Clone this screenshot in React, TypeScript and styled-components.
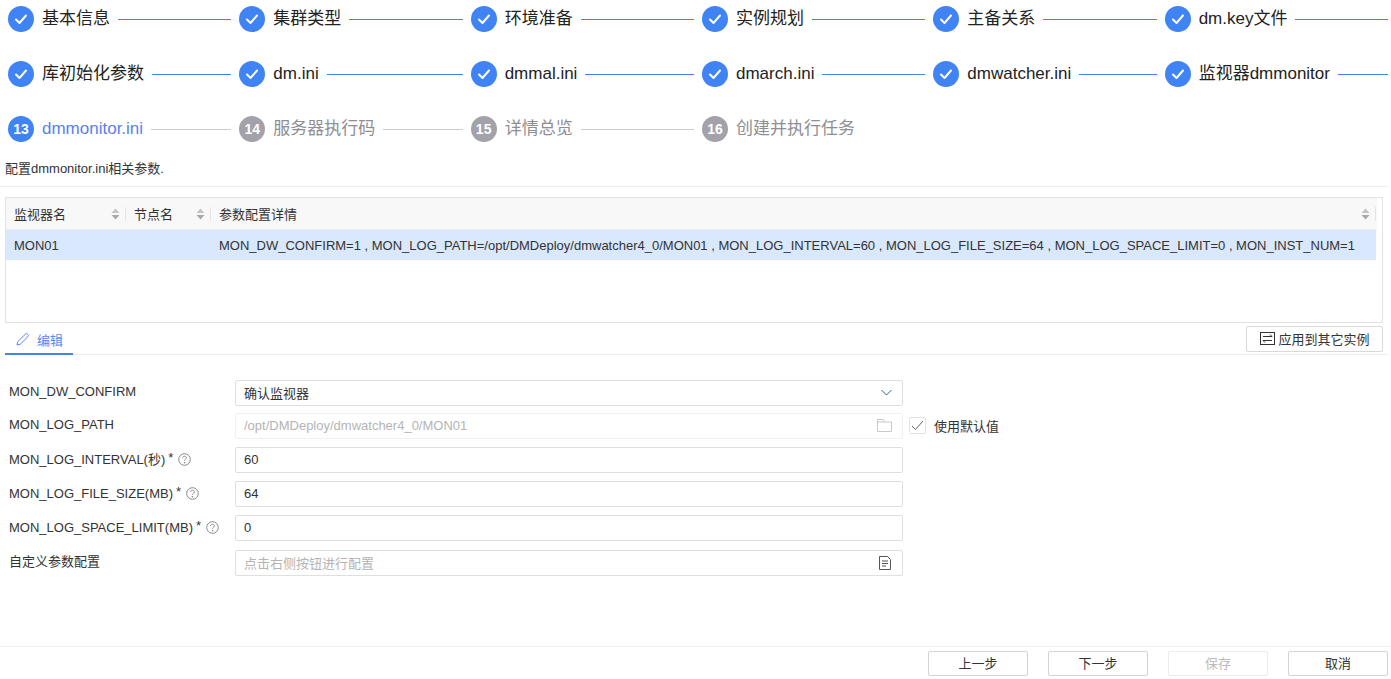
import React from "react";
import styled, { createGlobalStyle } from "styled-components";

const Global = createGlobalStyle`
  html, body { margin: 0; padding: 0; background: #fff; overflow: hidden; }
  body { font-family: "Liberation Sans", "Noto Sans CJK SC", sans-serif; color: #333; }
  * { box-sizing: border-box; }
`;
const Page = styled.div`
  width: 1391px; height: 679px; display: flex; flex-direction: column; overflow: hidden;
`;
const Steps = styled.div`
  width: 1388px; display: grid; grid-template-columns: repeat(6, 1fr); grid-auto-rows: 55px; padding-top: 6px; height: 163px;
`;
const Step = styled.div`
  display: flex; align-items: center; height: 26px; padding-left: 8px; min-width: 0;
`;
const Circle = styled.div<{ $state: string }>`
  width: 26px; height: 26px; border-radius: 50%; flex: none; display: flex; align-items: center; justify-content: center;
  color: #fff; font-size: 14px; font-weight: 700;
  background: ${p => (p.$state === "todo" ? "#a3a2aa" : "#3f83f4")};
`;
const StepTitle = styled.span<{ $state: string }>`
  margin-left: 8px; font-size: 17px; line-height: 24px; white-space: nowrap; flex: none;
  color: ${p => (p.$state === "todo" ? "#8e8e93" : p.$state === "active" ? "#5a7ff0" : "#222")};
`;
const StepLine = styled.div<{ $state: string }>`
  flex: 1; height: 1px; margin-left: 8px; background: ${p => (p.$state === "done" ? "#3f83f4" : "#ccc")};
`;
const Desc = styled.div`
  font-size: 13px; line-height: 16px; color: #333; padding-left: 5px; height: 26px; margin-top: -2px; border-bottom: 1px solid #eee; width: 1388px;
`;
const TableWrap = styled.div`
  margin: 10px 0 0 5px; width: 1378px; height: 126px; border: 1px solid #e2e2e2; overflow: hidden;
`;
const Head = styled.div`
  display: grid; grid-template-columns: 120px 85px 1165px; height: 32px; background: #f8f8f8; border-bottom: 1px solid #eee;
  width: 1371px;
`;
const HeadCell = styled.div`
  display: flex; align-items: center; justify-content: space-between; font-size: 13px; color: #333; padding: 0 0 1px 8px;
`;
const Sort = styled.div`
  display: flex; align-items: center; gap: 5px; margin-top: 1px;
`;
const Sep = styled.span`
  width: 1px; height: 14px; background: #e4e4e4;
`;
const Row = styled.div`
  display: grid; grid-template-columns: 120px 85px 1165px; height: 30px; background: #d9e8fd; align-items: center; font-size: 13px; color: #333; width: 1370px;
`;
const Cell = styled.div`
  padding-left: 8px; white-space: nowrap;
`;
const TabBar = styled.div`
  margin-left: 5px; width: 1383px; height: 32px; display: flex; justify-content: space-between; border-bottom: 1px solid #eee;
`;
const Tab = styled.div`
  width: 68px; height: 32px; display: flex; align-items: center; justify-content: center; gap: 7px; padding-top: 3px; font-size: 13px; color: #5a85f0; border-bottom: 2px solid #3f83f4; margin-bottom: -1px;
`;
const ApplyBtn = styled.button`
  width: 137px; height: 26px; margin: 3px 5px 0 0; background: #fff; border: 1px solid #d9d9d9; border-radius: 2px; display: flex; align-items: center; justify-content: center; gap: 3px;
  font: 13px "Liberation Sans", "Noto Sans CJK SC", sans-serif; color: #333; padding: 0 0 1px 1px;
`;
const Form = styled.div`
  padding: 25px 0 0 9px; display: flex; flex-direction: column;
`;
const FormRow = styled.div<{ $h?: number }>`
  display: flex; height: ${p => p.$h ?? 34}px; align-items: flex-start;
`;
const Label = styled.div<{ $required?: boolean }>`
  width: 226px; flex: none; font-size: 13px; line-height: 22px; color: #333; display: flex; align-items: center; white-space: nowrap;
  padding-top: ${p => (p.$required ? 2 : 1)}px;
`;
const Star = styled.span`
  margin: -4px 0 0 3px; font-size: 13px;
`;
const HelpIcon = styled.svg`
  width: 13px; height: 13px; margin-left: 5px; margin-top: -1px;
`;
const Field = styled.div<{ $disabled?: boolean }>`
  width: 668px; height: 26px; border: 1px solid ${p => (p.$disabled ? "#f0f0f0" : "#dfdfdf")}; border-radius: 2px; display: flex; align-items: center; justify-content: space-between; padding: 0 10px 1px 8px; font-size: 13px;
  background: #fff; color: #333;
`;
const Muted = styled.span`
  color: #b4b4b4;
`;
const CheckWrap = styled.div`
  display: flex; align-items: center; margin: 3px 0 0 6px; font-size: 13px; color: #333; gap: 8px;
`;
const CheckBox = styled.div`
  width: 17px; height: 17px; border: 1px solid #e2e2e2; border-radius: 2px; display: flex; align-items: center; justify-content: center;
`;
const Footer = styled.div`
  margin-top: auto; border-top: 1px solid #eee; height: 33px; display: flex; justify-content: flex-end; gap: 20px; padding: 4px 3px 0 0;
`;
const FootBtn = styled.button<{ $disabled?: boolean }>`
  width: 100px; height: 25px; background: #fff; border-radius: 2px; padding: 0 0 2px;
  border: 1px solid ${p => (p.$disabled ? "#ececec" : "#d4d4d4")};
  color: ${p => (p.$disabled ? "#bbb" : "#333")};
  font: 13px "Liberation Sans", "Noto Sans CJK SC", sans-serif;
`;

const SortIcon = () => (
  <svg width="9" height="12" viewBox="0 0 9 12"><path d="M4.5 0.5 8.5 5H.5z" fill="#c4c4c4" /><path d="M.5 7h8l-4 4.5z" fill="#a8a8a8" /></svg>
);
const Check = () => (
  <svg width="14" height="14" viewBox="0 0 14 14" fill="none"><path d="M2 7.5 5.5 11 12 3.5" stroke="#fff" strokeWidth="2" strokeLinecap="round" strokeLinejoin="round" /></svg>
);
const Help = () => (
  <HelpIcon viewBox="0 0 13 13" fill="none">
    <circle cx="6.5" cy="6.5" r="5.8" stroke="#888" />
    <path d="M4.6 5c0-1.100.9-1.800 1.900-1.800s1.900.7 1.900 1.700c0 1.300-1.900 1.400-1.900 2.800" stroke="#888" />
    <circle cx="6.5" cy="9.800" r=".8" fill="#888" />
  </HelpIcon>
);

const steps: [string, string, string?][] = [
  ["基本信息", "done"], ["集群类型", "done"], ["环境准备", "done"], ["实例规划", "done"], ["主备关系", "done"], ["dm.key文件", "done"],
  ["库初始化参数", "done"], ["dm.ini", "done"], ["dmmal.ini", "done"], ["dmarch.ini", "done"], ["dmwatcher.ini", "done"], ["监视器dmmonitor", "done"],
  ["dmmonitor.ini", "active", "13"], ["服务器执行码", "todo", "14"], ["详情总览", "todo", "15"], ["创建并执行任务", "todo", "16"],
];

export default function App() {
  return (
    <Page>
      <Global />
      <Steps>
        {steps.map(([t, s, n], i) => (
          <Step key={t}>
            <Circle $state={s}>{n ?? <Check />}</Circle>
            <StepTitle $state={s}>{t}</StepTitle>
            {i < 15 && <StepLine $state={s} />}
          </Step>
        ))}
      </Steps>
      <Desc>配置dmmonitor.ini相关参数.</Desc>
      <TableWrap>
        <Head>
          <HeadCell>监视器名<Sort><SortIcon /><Sep /></Sort></HeadCell>
          <HeadCell>节点名<Sort><SortIcon /><Sep /></Sort></HeadCell>
          <HeadCell>参数配置详情<Sort><SortIcon /><Sep /></Sort></HeadCell>
        </Head>
        <Row>
          <Cell>MON01</Cell>
          <Cell />
          <Cell>MON_DW_CONFIRM=1 , MON_LOG_PATH=/opt/DMDeploy/dmwatcher4_0/MON01 , MON_LOG_INTERVAL=60 , MON_LOG_FILE_SIZE=64 , MON_LOG_SPACE_LIMIT=0 , MON_INST_NUM=1</Cell>
        </Row>
      </TableWrap>
      <TabBar>
        <Tab>
          <svg width="15" height="15" viewBox="0 0 15 15" fill="none"><path d="M2 13l.8-3.300L10.500 2a1.300 1.300 0 0 1 1.900 0l.6.6a1.300 1.300 0 0 1 0 1.900L5.300 12.200z" stroke="#5a85f0" /></svg>
          编辑
        </Tab>
        <ApplyBtn>
          <svg width="15" height="13" viewBox="0 0 15 13" fill="none"><rect x=".5" y=".5" width="14" height="12" stroke="#333" /><path d="M3 4.500h9L10 2.500M12 8.500H3L5 10.500" stroke="#333" /></svg>
          应用到其它实例
        </ApplyBtn>
      </TabBar>
      <Form>
        <FormRow $h={33}>
          <Label>MON_DW_CONFIRM</Label>
          <Field>确认监视器
            <svg width="11" height="7" viewBox="0 0 11 7" fill="none"><path d="M.5 1 5.500 6l5-5" stroke="#2c5f94" /></svg>
          </Field>
        </FormRow>
        <FormRow>
          <Label>MON_LOG_PATH</Label>
          <Field $disabled><Muted>/opt/DMDeploy/dmwatcher4_0/MON01</Muted>
            <svg width="15" height="13" viewBox="0 0 15 13" fill="none"><path d="M.5 12.500V.5h6l1 2.500h7v9.500zM.5 3h7" stroke="#c8c8c8" /></svg>
          </Field>
          <CheckWrap>
            <CheckBox><svg width="13" height="11" viewBox="0 0 13 11" fill="none"><path d="M1 6l3.500 3.500L12 1" stroke="#666" /></svg></CheckBox>
            使用默认值
          </CheckWrap>
        </FormRow>
        <FormRow>
          <Label $required>MON_LOG_INTERVAL(秒)<Star>*</Star><Help /></Label>
          <Field>60</Field>
        </FormRow>
        <FormRow>
          <Label $required>MON_LOG_FILE_SIZE(MB)<Star>*</Star><Help /></Label>
          <Field>64</Field>
        </FormRow>
        <FormRow $h={35}>
          <Label $required>MON_LOG_SPACE_LIMIT(MB)<Star>*</Star><Help /></Label>
          <Field>0</Field>
        </FormRow>
        <FormRow>
          <Label>自定义参数配置</Label>
          <Field><Muted>点击右侧按钮进行配置</Muted>
            <svg width="14" height="14" viewBox="0 0 14 14" fill="none"><path d="M1.500.5h8l3 3v10h-11zM4 5h6M4 7.500h6M4 10h4" stroke="#555" /></svg>
          </Field>
        </FormRow>
      </Form>
      <Footer>
        <FootBtn>上一步</FootBtn>
        <FootBtn>下一步</FootBtn>
        <FootBtn $disabled>保存</FootBtn>
        <FootBtn>取消</FootBtn>
      </Footer>
    </Page>
  );
}
